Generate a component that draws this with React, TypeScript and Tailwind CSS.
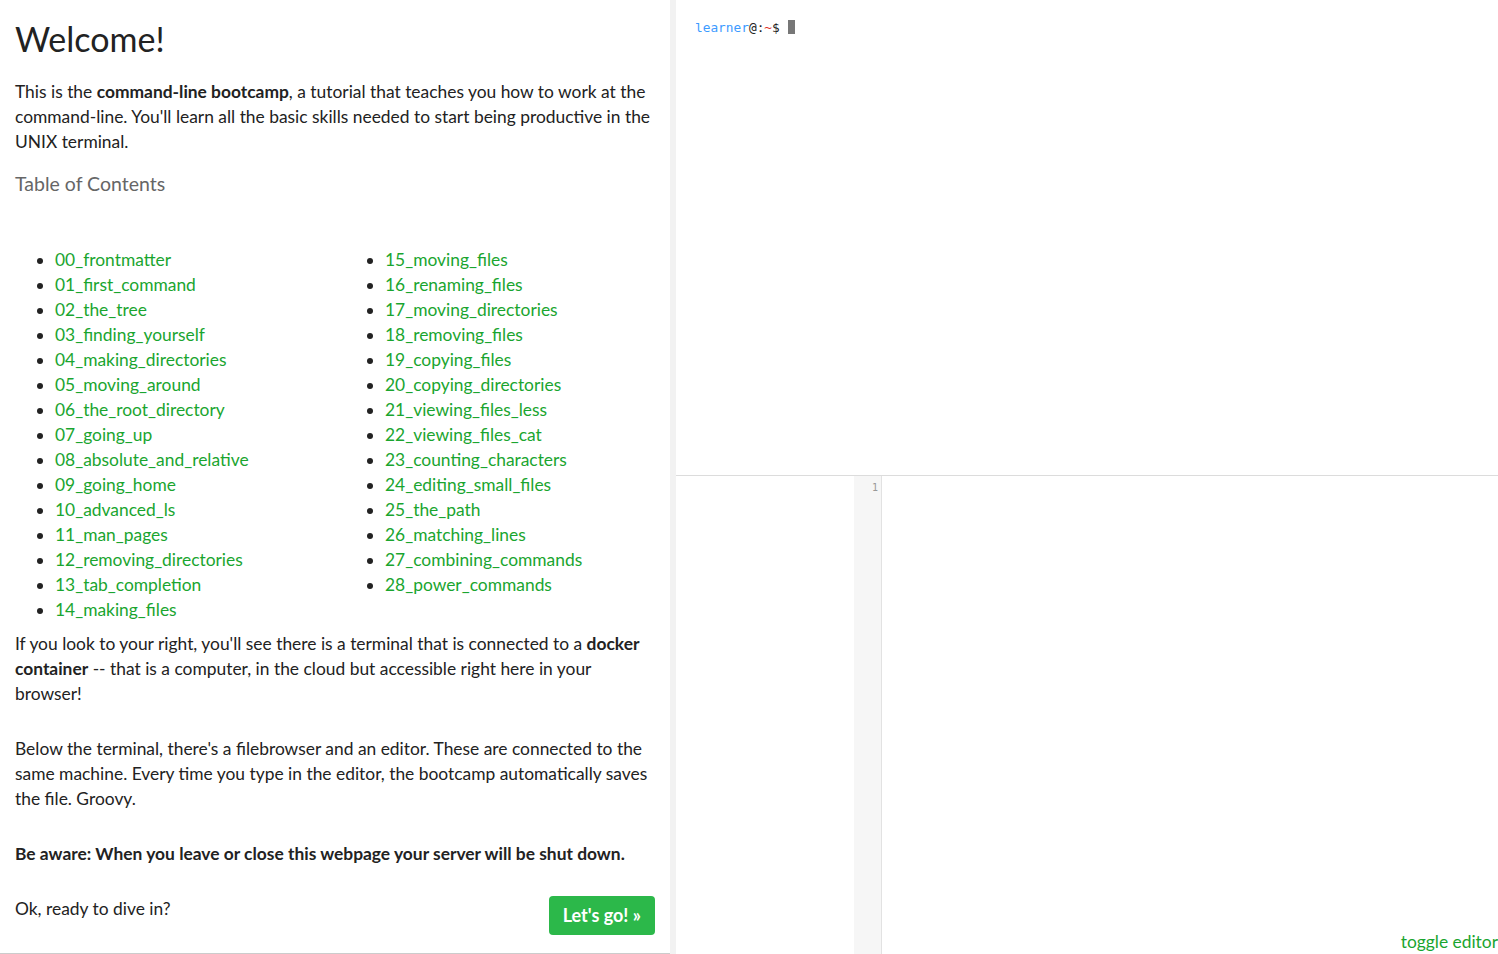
const lessonsLeft = [
  '00_frontmatter',
  '01_first_command',
  '02_the_tree',
  '03_finding_yourself',
  '04_making_directories',
  '05_moving_around',
  '06_the_root_directory',
  '07_going_up',
  '08_absolute_and_relative',
  '09_going_home',
  '10_advanced_ls',
  '11_man_pages',
  '12_removing_directories',
  '13_tab_completion',
  '14_making_files',
];

const lessonsRight = [
  '15_moving_files',
  '16_renaming_files',
  '17_moving_directories',
  '18_removing_files',
  '19_copying_files',
  '20_copying_directories',
  '21_viewing_files_less',
  '22_viewing_files_cat',
  '23_counting_characters',
  '24_editing_small_files',
  '25_the_path',
  '26_matching_lines',
  '27_combining_commands',
  '28_power_commands',
];

function LessonList({ items }: { items: string[] }) {
  return (
    <ul className="list-disc pl-[40px] marker:text-[#222]">
      {items.map((item) => (
        <li key={item} className="h-[25px] leading-[25px]">
          <a href="#" className="text-[#1aa52f] hover:underline">{item}</a>
        </li>
      ))}
    </ul>
  );
}

export default function App() {
  return (
    <div className="flex h-[954px] w-full overflow-hidden bg-white text-[#222] font-['Lato','Open_Sans',sans-serif]">
      <div className="w-[670px] shrink-0 border-b border-[#ccc] pl-[15px] pr-[13px] text-[17.4px] leading-[25px]">
        <h1 className="mt-[17px] text-[34px] leading-[44px] font-normal">Welcome!</h1>
        <p className="mt-[18px]">
          This is the <b>command-line bootcamp</b>, a tutorial that teaches you how to work at the
          command-line. You'll learn all the basic skills needed to start being productive in the
          UNIX terminal.
        </p>
        <h3 className="mt-[16px] text-[19.5px] leading-[28px] text-[#666]">Table of Contents</h3>

        <div className="mt-[49px] grid grid-cols-[330px_1fr]">
          <LessonList items={lessonsLeft} />
          <LessonList items={lessonsRight} />
        </div>

        <p className="mt-[9px]">
          If you look to your right, you'll see there is a terminal that is connected to a{' '}
          <b>docker container</b> -- that is a computer, in the cloud but accessible right here in your
          browser!
        </p>
        <p className="mt-[30px]">
          Below the terminal, there's a filebrowser and an editor. These are connected to the same
          machine. Every time you type in the editor, the bootcamp automatically saves the file. Groovy.
        </p>
        <p className="mt-[30px] font-bold">
          Be aware: When you leave or close this webpage your server will be shut down.
        </p>
        <div className="mt-[30px] flex items-start justify-between pr-[2px]">
          <p>Ok, ready to dive in?</p>
          <button className="h-[39px] rounded-[4px] bg-[#2cb84a] px-[14px] text-[18px] font-bold text-white">
            Let's go! »
          </button>
        </div>
      </div>

      <div className="w-[6px] shrink-0 bg-[#f2f2f2]" />

      <div className="relative flex flex-1 flex-col">
        <div className="h-[476px] shrink-0 border-b border-[#dcdcdc] px-[19px] pt-[18px] font-['DejaVu_Sans_Mono',monospace] text-[12.8px] leading-[17px]">
          <span className="text-[#3d9bff]">learner</span>
          <span className="text-[#222]">@:</span>
          <span className="text-[#e0302a]">~</span>
          <span className="text-[#222]">$ </span>
          <span className="inline-block h-[14px] w-[7px] translate-y-[2px] bg-[#777]" />
        </div>

        <div className="flex flex-1">
          <div className="w-[178px] shrink-0" />
          <div className="w-[28px] shrink-0 border-r border-[#e2e2e2] bg-[#f6f6f6] pr-[3px] pt-[5px] text-right font-['DejaVu_Sans_Mono',monospace] text-[10px] leading-[14px] text-[#999]">
            1
          </div>
          <div className="flex-1" />
        </div>

        <a href="#" className="absolute bottom-0 right-0 text-[17.4px] leading-[25px] text-[#1aa52f]">
          toggle editor
        </a>
      </div>
    </div>
  );
}
